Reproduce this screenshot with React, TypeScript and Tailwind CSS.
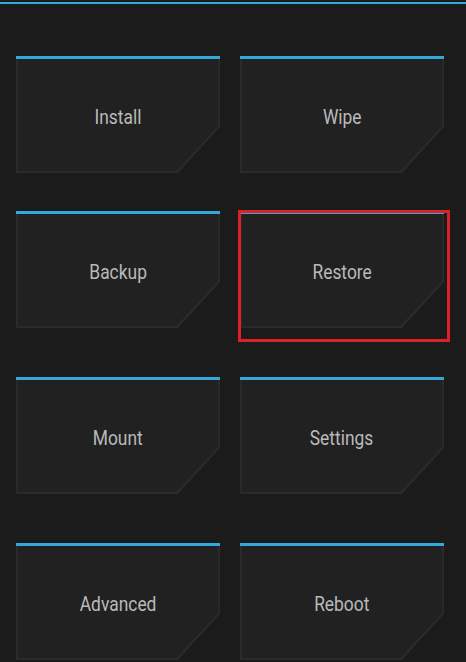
import React from 'react';

type Tile = { label: string; selected?: boolean };

const rows: { mt: string; tiles: Tile[] }[] = [
  { mt: 'mt-[52px]', tiles: [{ label: 'Install' }, { label: 'Wipe' }] },
  { mt: 'mt-[38px]', tiles: [{ label: 'Backup' }, { label: 'Restore', selected: true }] },
  { mt: 'mt-[49px]', tiles: [{ label: 'Mount' }, { label: 'Settings' }] },
  { mt: 'mt-[49px]', tiles: [{ label: 'Advanced' }, { label: 'Reboot' }] },
];

const MenuButton: React.FC<Tile> = ({ label, selected }) => (
  <div className="relative w-[204px] h-[117px]">
    {/* chamfered frame: outer layer is the border, inner layer the face */}
    <div className="w-full h-full flex flex-col px-[2px] pb-[2px] bg-[#2a2a2a] [clip-path:polygon(0_0,100%_0,100%_71px,162px_100%,0_100%)]">
      <div className="h-[3px] -mx-[2px] bg-[#33a9d9]" />
      <div className="flex-1 flex items-center justify-center bg-[#212121] [clip-path:polygon(0_0,100%_0,100%_67px,158px_100%,0_100%)]">
        <span className="inline-block scale-x-[0.87] text-[20px] leading-none text-[#bababa] font-['Roboto','Noto_Sans',sans-serif] pt-[3px]">
          {label}
        </span>
      </div>
    </div>
    {selected && (
      <div className="absolute left-[-2px] top-[-1px] w-[212px] h-[132px] border-[3px] border-[#dc2229] pointer-events-none" />
    )}
  </div>
);

const App: React.FC = () => {
  return (
    <div className="min-h-screen w-full bg-[#1b1b1b] overflow-hidden">
      <div className="pt-[2px]">
        <div className="h-[2px] w-full bg-[#33a9d9]" />
      </div>

      {rows.map((row, i) => (
        <div key={i} className={`${row.mt} flex gap-[20px] pl-[16px]`}>
          {row.tiles.map((t) => (
            <MenuButton key={t.label} {...t} />
          ))}
        </div>
      ))}
    </div>
  );
};

export default App;
